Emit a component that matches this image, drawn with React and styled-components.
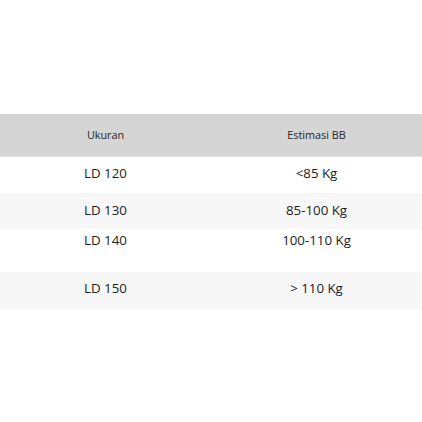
import React from "react";
import styled, { createGlobalStyle } from "styled-components";

const Global = createGlobalStyle`
  html, body { margin: 0; padding: 0; background: #ffffff; }
  body { font-family: "Open Sans", "Noto Sans", sans-serif; color: #2b2b2b; }
`;

const Page = styled.div`
  width: 422px;
  height: 422px;
  padding-top: 114px;
  box-sizing: border-box;
`;

const Table = styled.div`
  display: flex;
  flex-direction: column;
  width: 100%;
`;

const Row = styled.div`
  display: grid;
  grid-template-columns: 211px 211px;
  height: ${(p) => p.$h}px;
  background: ${(p) => p.$bg};
  align-items: ${(p) => (p.$top ? "start" : "center")};
  padding-top: ${(p) => p.$pt || 0}px;
  padding-bottom: ${(p) => p.$pb || 0}px;
  box-sizing: border-box;
`;

const HeadRow = styled(Row)`
  border-bottom: 1px solid #e4e4e4;
`;

const HeadCell = styled.div`
  text-align: center;
  font-size: 10.8px;
  line-height: 14px;
  color: #262626;
`;

const Cell = styled.div`
  text-align: center;
  font-size: 13.3px;
  line-height: 17px;
  color: #1c1c1c;
`;

const rows = [
  { a: "LD 120", b: "<85 Kg", h: 36, bg: "#ffffff", pb: 3 },
  { a: "LD 130", b: "85-100 Kg", h: 36, bg: "#f7f7f7", pb: 2 },
  { a: "LD 140", b: "100-110 Kg", h: 43, bg: "#ffffff", top: true, pt: 3 },
  { a: "LD 150", b: "> 110 Kg", h: 37, bg: "#f7f7f7", pb: 4 },
];

export default function App() {
  return (
    <Page>
      <Global />
      <Table>
        <HeadRow $h={43} $bg="#d5d5d5">
          <HeadCell>Ukuran</HeadCell>
          <HeadCell>Estimasi BB</HeadCell>
        </HeadRow>
        {rows.map((r) => (
          <Row key={r.a} $h={r.h} $bg={r.bg} $top={r.top} $pt={r.pt} $pb={r.pb}>
            <Cell>{r.a}</Cell>
            <Cell>{r.b}</Cell>
          </Row>
        ))}
      </Table>
    </Page>
  );
}
